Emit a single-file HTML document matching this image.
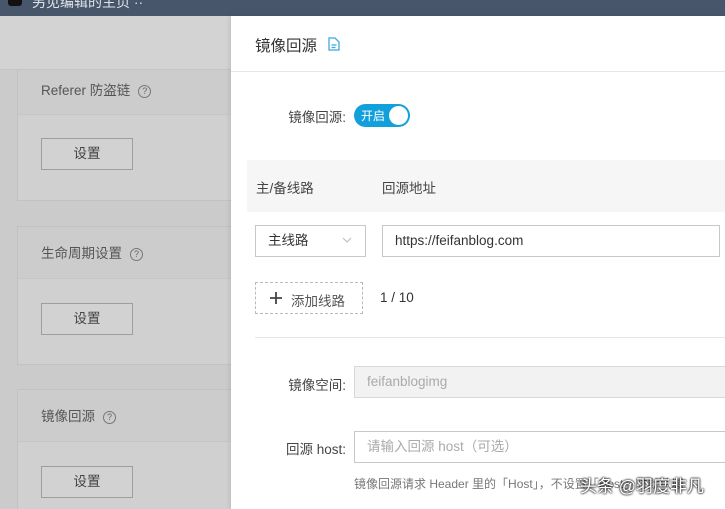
<!DOCTYPE html>
<html style="width:725px;height:509px;overflow:hidden"><head><meta charset="utf-8"><style>
*{margin:0;padding:0;box-sizing:border-box}
body{width:725px;height:509px;overflow:hidden;position:relative;background:#cbcbcb;font-family:"Liberation Sans","Noto Sans CJK SC",sans-serif;font-size:13px;color:#333}
.a{position:absolute}
.card{position:absolute;left:17px;width:220px;background:#d0d0d0;border:1px solid #c2c2c2}
.ct{position:absolute;left:0;right:0;top:0;height:52px;background:#cccccc;border-bottom:1px solid #c6c6c6}
.ct span{position:absolute;left:23px;top:15px;color:#555;font-size:13.5px}
.q{display:inline-block;width:13px;height:13px;border:1px solid #777;border-radius:50%;font-size:9px;text-align:center;line-height:11px;margin-left:8px;vertical-align:1px;color:#666;font-style:normal}
.btn{position:absolute;left:23px;width:92px;height:32px;border:1px solid #9e9e9e;background:#d2d2d2;text-align:center;line-height:30px;color:#444;font-size:13.5px}
.lbl{position:absolute;color:#444;font-size:13.5px;text-align:right}
.inp{position:absolute;border:1px solid #c8c8c8;height:32px;line-height:30px;padding-left:12px;font-size:13.5px}
</style></head><body>
<div class="a" style="left:0;top:0;width:725px;height:16px;background:#48566b;overflow:hidden">
<div class="a" style="left:8px;top:0;width:14px;height:6px;background:#111;border-radius:0 0 3px 3px"></div>
<div class="a" style="left:32px;top:-8px;color:#dfe3e8;font-size:14px;white-space:nowrap">另见编辑的主页 ··</div></div>
<div class="a" style="left:0;top:16px;width:231px;height:54px;background:#d3d3d3;border-bottom:1px solid #c4c4c4"></div>

<div class="card" style="top:70px;height:131px;border-top:none"><div class="ct" style="height:45px"><span style="top:9px">Referer 防盗链<i class="q">?</i></span></div><div class="btn" style="top:68px">设置</div></div>
<div class="card" style="top:226px;height:139px"><div class="ct"><span>生命周期设置<i class="q">?</i></span></div><div class="btn" style="top:76px">设置</div></div>
<div class="card" style="top:389px;height:130px"><div class="ct"><span>镜像回源<i class="q">?</i></span></div><div class="btn" style="top:76px">设置</div></div>

<div class="a" style="left:231px;top:16px;width:494px;height:493px;background:#fff;box-shadow:-2px 0 4px rgba(0,0,0,.08)"></div>
<div class="a" style="left:255px;top:34px;font-size:15.5px;color:#333">镜像回源</div>
<svg class="a" style="left:328px;top:37px" width="12" height="14" viewBox="0 0 12 14"><path d="M1 1h6l4 4v8H1z" fill="none" stroke="#3fa7e0" stroke-width="1.3"/><path d="M3.5 8h5M3.5 10.5h4" stroke="#3fa7e0" stroke-width="1.2"/></svg>
<div class="a" style="left:231px;top:71px;width:494px;height:1px;background:#e6e6e6"></div>

<div class="lbl" style="left:270px;top:106px;width:76px">镜像回源:</div>
<div class="a" style="left:354px;top:104px;width:56px;height:23px;border-radius:12px;background:#12a0dc"></div>
<div class="a" style="left:361px;top:107px;color:#fff;font-size:12px">开启</div>
<div class="a" style="left:389px;top:106px;width:19px;height:19px;border-radius:50%;background:#fff"></div>

<div class="a" style="left:247px;top:160px;width:478px;height:52px;background:#f6f6f6"></div>
<div class="a" style="left:256px;top:177px;color:#444;font-size:13.5px">主/备线路</div>
<div class="a" style="left:382px;top:177px;color:#444;font-size:13.5px">回源地址</div>

<div class="inp" style="left:255px;top:225px;width:111px;color:#333">主线路</div>
<svg class="a" style="left:342px;top:237px" width="10" height="7" viewBox="0 0 10 7"><path d="M1 1l4 4 4-4" fill="none" stroke="#bbb" stroke-width="1"/></svg>
<div class="inp" style="left:382px;top:225px;width:338px;color:#333">https://feifanblog.com</div>

<div class="a" style="left:255px;top:282px;width:108px;height:32px;border:1px dashed #bbb"></div>
<svg class="a" style="left:270px;top:292px" width="12" height="12" viewBox="0 0 12 12"><path d="M6 0v12M0 6h12" stroke="#444" stroke-width="1.8"/></svg>
<div class="a" style="left:291px;top:290px;color:#555;font-size:13.5px">添加线路</div>
<div class="a" style="left:380px;top:290px;color:#333;font-size:13.5px">1 / 10</div>
<div class="a" style="left:255px;top:337px;width:470px;height:1px;background:#e6e6e6"></div>

<div class="lbl" style="left:270px;top:374px;width:76px">镜像空间:</div>
<div class="inp" style="left:354px;top:366px;width:380px;background:#f2f2f2;border-color:#d8d8d8;color:#aaa">feifanblogimg</div>
<div class="lbl" style="left:260px;top:438px;width:86px">回源 host:</div>
<div class="inp" style="left:354px;top:431px;width:380px;color:#aaa">请输入回源 host（可选）</div>
<div class="a" style="left:354px;top:475px;color:#777;font-size:12px;white-space:nowrap">镜像回源请求 Header 里的「Host」，不设置「Host」时默认域</div>
<div class="a" style="left:580px;top:472px;color:#fff;font-size:17px;white-space:nowrap;text-shadow:0 0 2px #000,0 0 2px #000">头条 @羽度非凡</div>
</body></html>
